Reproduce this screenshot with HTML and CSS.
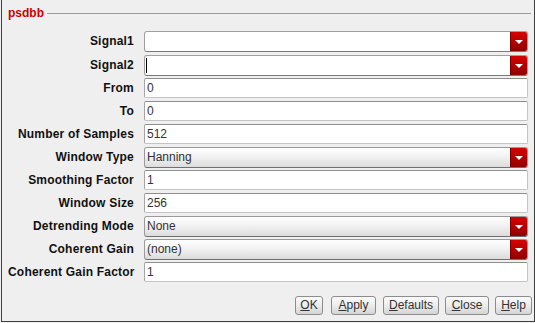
FILE: index.html
```html
<!DOCTYPE html>
<html lang="en">
<head>
  <meta charset="UTF-8">
  <title>psdbb</title>
  <link rel="stylesheet" href="styles.css">
</head>
<body>
  <div class="window">
    <div class="header">
      <span class="title">psdbb</span>
      <span class="rule"></span>
    </div>

    <div class="form">
      <label class="label">Signal1</label>
      <div class="combo editable"><span class="value"></span><span class="arrow"></span></div>

      <label class="label">Signal2</label>
      <div class="combo editable"><span class="value"><span class="caret"></span></span><span class="arrow"></span></div>

      <label class="label">From</label>
      <div class="entry">0</div>

      <label class="label">To</label>
      <div class="entry">0</div>

      <label class="label">Number of Samples</label>
      <div class="entry">512</div>

      <label class="label">Window Type</label>
      <div class="combo"><span class="value">Hanning</span><span class="arrow"></span></div>

      <label class="label">Smoothing Factor</label>
      <div class="entry">1</div>

      <label class="label">Window Size</label>
      <div class="entry">256</div>

      <label class="label">Detrending Mode</label>
      <div class="combo"><span class="value">None</span><span class="arrow"></span></div>

      <label class="label">Coherent Gain</label>
      <div class="combo"><span class="value">(none)</span><span class="arrow"></span></div>

      <label class="label">Coherent Gain Factor</label>
      <div class="entry">1</div>
    </div>

    <div class="buttons">
      <button class="btn btn-ok"><u>O</u>K</button>
      <button class="btn btn-apply"><u>A</u>pply</button>
      <button class="btn btn-defaults"><u>D</u>efaults</button>
      <button class="btn btn-close"><u>C</u>lose</button>
      <button class="btn btn-help"><u>H</u>elp</button>
    </div>
  </div>
</body>
</html>
```

FILE: styles.css
```css
/* Base */
html, body {
  margin: 0;
  padding: 0;
  background-color: #efefef;
  font-family: "Liberation Sans", Arial, sans-serif;
  font-size: 12px;
}

/* Window frame */
.window {
  box-sizing: border-box;
  width: 534px;
  height: 322px;
  margin-left: 1px;
  border: 1px solid #404040;
  border-top: 0;
  display: flex;
  flex-direction: column;
}

/* Group header */
.header {
  height: 30px;
  box-sizing: border-box;
  padding: 5px 3px 0 6px;
  display: flex;
  align-items: flex-start;
}

.title {
  color: #cc0000;
  font-weight: bold;
  line-height: 16px;
}

.rule {
  flex: 1;
  height: 1px;
  margin: 8px 0 0 3px;
  background-color: #9a9a9a;
}

/* Form grid */
.form {
  display: grid;
  grid-template-columns: 126px 384px;
  grid-template-rows: 24px repeat(10, 23px);
  column-gap: 10px;
  padding-left: 6px;
  align-items: start;
}

.label {
  margin-top: 1px;
  line-height: 20px;
  text-align: right;
  font-weight: bold;
  letter-spacing: 0.2px;
  color: #111;
  white-space: nowrap;
}

/* Text entry */
.entry {
  box-sizing: border-box;
  height: 20px;
  margin-top: 1px;
  padding-left: 2px;
  line-height: 18px;
  color: #333;
  background-color: #fff;
  border: 1px solid #c4c4c4;
  border-top-color: #8e8e8e;
  border-left-color: #a6a6a6;
  border-radius: 2px;
}

/* Combo box */
.combo {
  box-sizing: border-box;
  height: 21px;
  margin-top: 1px;
  display: flex;
  color: #333;
  background: linear-gradient(#ffffff, #f2f2f2 45%, #dcdcdc);
  border: 1px solid #9a9a9a;
  border-bottom-color: #707070;
  border-radius: 3px;
  overflow: hidden;
}

.combo.editable {
  background: #fff;
  border-color: #a0a0a0;
  border-bottom-color: #7a7a7a;
}

.combo .value {
  flex: 1;
  padding-left: 2px;
  line-height: 19px;
  position: relative;
}

.caret {
  position: absolute;
  left: 1px;
  top: 2px;
  width: 1px;
  height: 15px;
  background-color: #000;
}

.arrow {
  width: 16px;
  position: relative;
  background: linear-gradient(#d80000, #b40000 50%, #900000);
  border-left: 1px solid #7a0000;
}

.arrow::after {
  content: "";
  position: absolute;
  left: 4px;
  top: 8px;
  border-left: 4px solid transparent;
  border-right: 4px solid transparent;
  border-top: 4px solid #fff;
}

/* Dialog buttons */
.buttons {
  margin-top: auto;
  padding: 0 2px 6px 0;
  display: flex;
  justify-content: flex-end;
  gap: 6px;
}

.btn {
  height: 19px;
  padding: 0;
  margin: 0;
  font-family: "Liberation Sans", Arial, sans-serif;
  font-size: 12px;
  line-height: 17px;
  text-align: center;
  color: #333;
  background: linear-gradient(#fbfbfb, #ececec 50%, #d4d4d4);
  border: 1px solid #8c8c8c;
  border-radius: 3px;
}

.btn-ok { width: 28px; margin-right: 2px; }
.btn-apply { width: 45px; }
.btn-defaults { width: 56px; margin-left: 1px; }
.btn-close { width: 44px; }
.btn-help { width: 37px; }
```
